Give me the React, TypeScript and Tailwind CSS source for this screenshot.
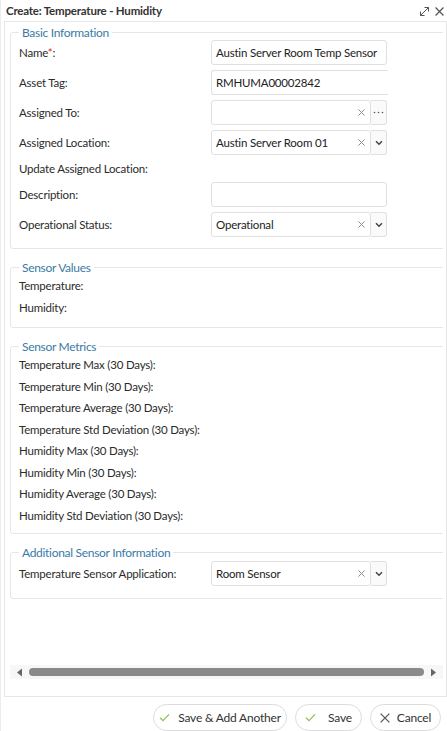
import React from "react";

const FONT = { fontFamily: "Lato, 'Noto Sans', sans-serif" };

function Legend({ children }: { children: React.ReactNode }) {
  return (
    <legend className="ml-0 px-[3px] text-[12px] leading-[15px] tracking-[-0.3px] text-[#3b7aa5]">{children}</legend>
  );
}

function Label({ children, req }: { children: React.ReactNode; req?: boolean }) {
  return (
    <div className="w-[192px] shrink-0 text-[11.5px] tracking-[-0.2px] text-[#2b2b2b]">
      {children}
      {req && <span className="text-[#d9272e]">*</span>}
      {req && ":"}
    </div>
  );
}

function TextBox({ value, noRight }: { value?: string; noRight?: boolean }) {
  return (
    <div
      className={
        noRight
          ? "h-[25px] w-[177px] rounded-l-[3px] border border-r-0 border-[#e0e0e0] pl-[4px] flex items-center whitespace-nowrap text-[11.5px] tracking-[-0.2px] text-[#222]"
          : "h-[25px] w-[176px] rounded-[3px] border border-[#e0e0e0] pl-[4px] flex items-center whitespace-nowrap text-[11.5px] tracking-[-0.2px] text-[#222]"
      }
    >
      {value}
    </div>
  );
}

function Chevron() {
  return (
    <svg width="8" height="6" viewBox="0 0 8 6">
      <path d="M1 1.2 L4 4.2 L7 1.2" fill="none" stroke="#444" strokeWidth="1.5" />
    </svg>
  );
}

function Dots() {
  return (
    <svg width="11" height="3" viewBox="0 0 11 3">
      <circle cx="1.5" cy="1.5" r="0.8" fill="#555" />
      <circle cx="5.5" cy="1.5" r="0.8" fill="#555" />
      <circle cx="9.5" cy="1.5" r="0.8" fill="#555" />
    </svg>
  );
}

function Cross({ color = "#888", size = 8, w = 1.1 }: { color?: string; size?: number; w?: number }) {
  return (
    <svg width={size} height={size} viewBox="0 0 8 8">
      <path d="M0.5 0.5 L7.5 7.5 M7.5 0.5 L0.5 7.5" stroke={color} strokeWidth={w} />
    </svg>
  );
}

function SelectBox({ value, kind }: { value?: string; kind: "dots" | "chev" }) {
  return (
    <div className="flex h-[25px] w-[176px]">
      <div className="flex h-full w-[160px] items-center justify-between whitespace-nowrap rounded-[3px] border border-[#e0e0e0] pl-[4px] pr-[5px] text-[11.5px] tracking-[-0.2px] text-[#222]">
        <span>{value}</span>
        <Cross size={7} />
      </div>
      <div className="flex h-full w-[16px] items-center justify-center rounded-r-[3px] border border-l-0 border-[#e0e0e0] bg-[#fafafa]">
        {kind === "chev" ? <Chevron /> : <Dots />}
      </div>
    </div>
  );
}

function Row({ label, children, req }: { label: string; children?: React.ReactNode; req?: boolean }) {
  return (
    <div className="flex items-center">
      <Label req={req}>{label}</Label>
      {children}
    </div>
  );
}

function Check() {
  return (
    <svg width="11" height="9" viewBox="0 0 11 9">
      <path d="M1 4.8 L4 7.6 L10 1.4" fill="none" stroke="#8cc152" strokeWidth="1.2" />
    </svg>
  );
}

const FS = "w-[440px] rounded-[3px] border border-[#e6e6e6] px-[8px]";

export default function App() {
  const metrics = [
    "Temperature Max (30 Days):",
    "Temperature Min (30 Days):",
    "Temperature Average (30 Days):",
    "Temperature Std Deviation (30 Days):",
    "Humidity Max (30 Days):",
    "Humidity Min (30 Days):",
    "Humidity Average (30 Days):",
    "Humidity Std Deviation (30 Days):",
  ];
  return (
    <div style={FONT} className="flex h-[731px] w-[447px] flex-col overflow-hidden border-l border-[#ececec] bg-white">
      <div className="flex h-[21px] shrink-0 items-center justify-between pl-[5px] pr-[3px] pt-[1px]">
        <span className="text-[11.5px] font-bold tracking-[-0.2px] text-[#333]">Create: Temperature - Humidity</span>
        <div className="flex items-center gap-[5px]">
          <svg width="11" height="11" viewBox="0 0 11 11">
            <path d="M1.5 9.5 L9.5 1.5 M5.5 1.5 H9.5 V5.5 M1.5 5.5 V9.5 H5.5" fill="none" stroke="#555" strokeWidth="1" />
          </svg>
          <Cross color="#555" size={9} />
        </div>
      </div>
      <div className="ml-[3px] flex h-[676px] shrink-0 flex-col border border-[#e6e6e6] pl-[5px]">
        <div className="w-[433px] overflow-hidden">
          <fieldset className={FS + " mt-[3px] pb-[11px]"}>
            <Legend>Basic Information</Legend>
            <div className="flex flex-col gap-[5px]">
              <Row label="Name" req>
                <TextBox value="Austin Server Room Temp Sensor" />
              </Row>
              <Row label="Asset Tag:">
                <TextBox value="RMHUMA00002842" noRight />
              </Row>
              <Row label="Assigned To:">
                <SelectBox kind="dots" />
              </Row>
              <Row label="Assigned Location:">
                <SelectBox kind="chev" value="Austin Server Room 01" />
              </Row>
              <div className="flex h-[17px] items-center">
                <Label>Update Assigned Location:</Label>
              </div>
              <Row label="Description:">
                <TextBox />
              </Row>
              <Row label="Operational Status:">
                <SelectBox kind="chev" value="Operational" />
              </Row>
            </div>
          </fieldset>

          <fieldset className={FS + " mt-[11px] pb-[8px]"}>
            <Legend>Sensor Values</Legend>
            <div className="flex h-[22px] items-center"><Label>Temperature:</Label></div>
            <div className="flex h-[22px] items-center"><Label>Humidity:</Label></div>
          </fieldset>

          <fieldset className={FS + " mt-[11px] pb-[7px]"}>
            <Legend>Sensor Metrics</Legend>
            {metrics.map((m) => (
              <div key={m} className="flex h-[21.5px] items-center">
                <div className="text-[11.5px] tracking-[-0.2px] text-[#2b2b2b]">{m}</div>
              </div>
            ))}
          </fieldset>

          <fieldset className={FS + " mt-[11px] pb-[12px]"}>
            <Legend>Additional Sensor Information</Legend>
            <div className="mt-[1px]">
              <Row label="Temperature Sensor Application:">
                <SelectBox kind="chev" value="Room Sensor" />
              </Row>
            </div>
          </fieldset>
        </div>

        <div className="flex-1" />
        <div className="mb-[17px] flex h-[14px] w-[433px] items-center bg-[#f7f7f7] px-[6px]">
          <svg width="7" height="9" viewBox="0 0 7 9"><path d="M6 0.5 L1 4.5 L6 8.5 Z" fill="#666" /></svg>
          <div className="mx-[6px] h-[8px] flex-1 rounded-full bg-[#8a8a8a]" />
          <svg width="7" height="9" viewBox="0 0 7 9"><path d="M1 0.5 L6 4.5 L1 8.5 Z" fill="#666" /></svg>
        </div>
      </div>
      <div className="mt-[7px] flex justify-end gap-[8px] pr-[6px]">
        <button className="flex h-[27px] w-[134px] items-center justify-center gap-[8px] rounded-full border border-[#dcdcdc] bg-white text-[12px] tracking-[-0.2px] text-[#333]">
          <Check />
          <span>Save &amp; Add Another</span>
        </button>
        <button className="flex h-[27px] w-[67px] items-center justify-center gap-[12px] rounded-full border border-[#dcdcdc] bg-white text-[12px] tracking-[-0.2px] text-[#333]">
          <Check />
          <span>Save</span>
        </button>
        <button className="flex h-[27px] w-[71px] items-center justify-center gap-[7px] rounded-full border border-[#dcdcdc] bg-white text-[12px] tracking-[-0.2px] text-[#333]">
          <Cross color="#555" size={10} w={1} />
          <span>Cancel</span>
        </button>
      </div>
    </div>
  );
}
